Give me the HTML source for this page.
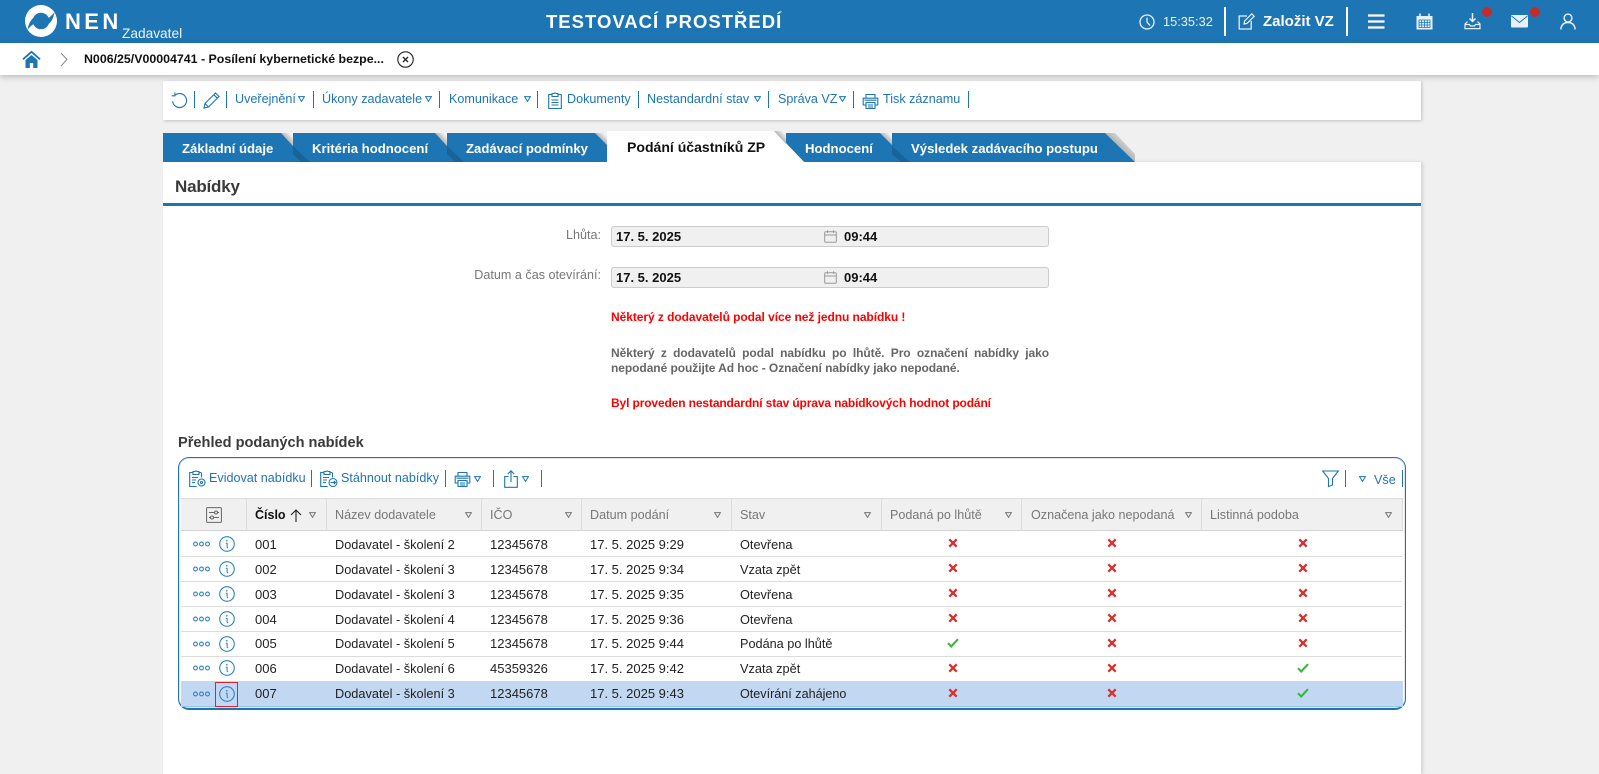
<!DOCTYPE html>
<html lang="cs">
<head>
<meta charset="utf-8">
<title>NEN</title>
<style>
html,body{margin:0;padding:0;width:1599px;height:774px;overflow:hidden;background:#f0f0f0;font-family:"Liberation Sans",Arial,sans-serif}
#p{position:relative;width:1599px;height:774px;overflow:hidden}
.a,.t{position:absolute}
.t{white-space:nowrap;line-height:18px;height:18px;font-size:13px}
.b{color:#1d75b4;font-size:12.6px}
.sep{position:absolute;width:1px;background:#1d75b4}
svg{position:absolute;overflow:visible}
.ic{fill:none;stroke:#1d75b4;stroke-width:1.1}
.hd{color:#777;font-size:12.6px}
.c{color:#222;font-size:13px}
.n{color:#222;font-size:12.75px}
.tb{color:#fff;font-weight:bold;font-size:13.15px}
.line{position:absolute;left:181px;width:1221px;height:1px;background:#dcdcdc}
.hs{position:absolute;top:498px;height:33px;width:1px;background:#dcdcdc}
</style>
</head>
<body>
<div id="p">
<svg width="0" height="0" style="position:absolute">
<defs>
<symbol id="tri" viewBox="0 0 7 6"><path d="M.6.6h5.800L3.500 5.400z" fill="none" stroke="currentColor" stroke-width="1"/></symbol>
<symbol id="x" viewBox="0 0 10 10"><path d="M1.300 1.300l7.400 7.400M8.700 1.300L1.300 8.700" stroke="#d5312f" stroke-width="2.300" fill="none"/></symbol>
<symbol id="ok" viewBox="0 0 12 10"><path d="M1 5.200l3.200 3.300L11 1.200" stroke="#3cb53c" stroke-width="2.100" fill="none"/></symbol>
<symbol id="dots" viewBox="0 0 17 6"><g fill="none" stroke="#2f82bd" stroke-width="1.100"><circle cx="2.500" cy="3" r="1.900"/><circle cx="8.500" cy="3" r="1.900"/><circle cx="14.500" cy="3" r="1.900"/></g></symbol>
<symbol id="inf" viewBox="0 0 16 16"><circle cx="8" cy="8" r="7.300" fill="none" stroke="#2f82bd" stroke-width="1.100"/><circle cx="7.800" cy="4.800" r=".8" fill="#2f82bd"/><path d="M6.800 7.300h1.300v3.600q0 .9 1.100.9" fill="none" stroke="#2f82bd" stroke-width="1"/></symbol>
<symbol id="prn" viewBox="0 0 17 17"><g fill="none" stroke="#1d75b4" stroke-width="1.100"><path d="M4 5V1.500h9V5M4 12H1.200V5.200h14.600V12H13"/><path d="M4 9.500h9v6H4zM6 12h5M6 14h5M2.500 7.200h12"/></g></symbol>
<symbol id="cal" viewBox="0 0 13 13"><g fill="none" stroke="#999" stroke-width="1"><rect x=".7" y="1.800" width="11.600" height="10.500" rx="1"/><path d="M.7 5h11.600M3.500.3v2.600M9.500.3v2.600"/></g></symbol>
</defs>
</svg>

<!-- top bar -->
<div class="a" style="left:0;top:0;width:1599px;height:43px;background:#1d75b4"></div>
<svg style="left:24px;top:4px" width="34" height="34" viewBox="0 0 34 34"><circle cx="17" cy="17" r="16" fill="#fff"/><circle cx="17" cy="17" r="8.300" fill="#1d75b4"/><path d="M10 13.500C6.500 16 4.500 20 3.600 25.500C6.500 22.500 8.300 20.500 10.800 19.500z" fill="#1d75b4"/><path d="M24 20.500C27.500 18 29.500 14 30.400 8.500C27.500 11.500 25.700 13.500 23.200 14.500z" fill="#1d75b4"/></svg>
<div class="t" style="left:65px;top:11px;color:#fff;font-weight:bold;font-size:22px;line-height:22px;height:22px;letter-spacing:3.400px">NEN</div>
<div class="t" style="left:122px;top:25px;color:#eaf3fa;font-size:13.700px">Zadavatel</div>
<div class="t" style="left:546px;top:11px;color:#fff;font-weight:bold;font-size:18.500px;line-height:21px;height:21px;letter-spacing:1px">TESTOVACÍ PROSTŘEDÍ</div>
<svg style="left:1139px;top:14px" width="16" height="16" viewBox="0 0 16 16"><circle cx="8" cy="8" r="7" fill="none" stroke="#e8f1f8" stroke-width="1.300"/><path d="M8 3.600V8l3 3.400" fill="none" stroke="#e8f1f8" stroke-width="1.300"/></svg>
<div class="t" style="left:1163px;top:13px;color:#e8f1f8;font-size:12.800px">15:35:32</div>
<div class="a" style="left:1224px;top:7px;width:2px;height:29px;background:#fff"></div>
<svg style="left:1238px;top:13px" width="18" height="17" viewBox="0 0 18 17"><path d="M9 3H1.200v13h12V8" fill="none" stroke="#e8f1f8" stroke-width="1.300"/><path d="M6 11l.6-3L13.800.8l2.400 2.400L9 10.400z" fill="none" stroke="#e8f1f8" stroke-width="1.200"/></svg>
<div class="t" style="left:1263px;top:13px;color:#fff;font-weight:bold;font-size:15px">Založit VZ</div>
<div class="a" style="left:1346px;top:7px;width:2px;height:29px;background:#fff"></div>
<svg style="left:1368px;top:14px" width="17" height="15" viewBox="0 0 17 15"><path d="M0 1.500h16.500M0 7.500h16.500M0 13.500h16.500" stroke="#fff" stroke-width="2.200" fill="none"/></svg>
<svg style="left:1416px;top:13px" width="17" height="17" viewBox="0 0 17 17"><path d="M.5 3h16v13.500H.5z" fill="#e8f1f8"/><path d="M4 .5v4M13 .5v4" stroke="#e8f1f8" stroke-width="1.600"/><path d="M3 7h11v7.500H3zM5.700 7v7.500M8.500 7v7.500M11.200 7v7.500M3 9.500h11M3 12h11" stroke="#1d75b4" stroke-width=".8" fill="none"/></svg>
<svg style="left:1464px;top:13px" width="17" height="17" viewBox="0 0 17 17"><path d="M8.500 0v8M5.500 5.500l3 3 3-3" stroke="#e8f1f8" stroke-width="1.500" fill="none"/><path d="M3.500 8.500L1 11v4.600h15V11l-2.500-2.500M1 11.500h4.500l1 1.500h4l1-1.500H16" stroke="#e8f1f8" stroke-width="1.200" fill="none"/></svg>
<div class="a" style="left:1482px;top:7px;width:10px;height:10px;border-radius:50%;background:#c62b2b"></div>
<svg style="left:1511px;top:15px" width="17" height="13" viewBox="0 0 17 13"><rect width="17" height="12.500" rx="1" fill="#e8f1f8"/><path d="M.5 1l8 6.500 8-6.500" stroke="#1d75b4" stroke-width="1" fill="none"/></svg>
<div class="a" style="left:1530px;top:7px;width:10px;height:10px;border-radius:50%;background:#c62b2b"></div>
<svg style="left:1560px;top:13px" width="16" height="17" viewBox="0 0 16 17"><circle cx="8" cy="5" r="3.900" fill="none" stroke="#e8f1f8" stroke-width="1.400"/><path d="M.8 16.500c.5-4.500 3-7 7.200-7s6.700 2.500 7.200 7" fill="none" stroke="#e8f1f8" stroke-width="1.400"/></svg>

<!-- breadcrumb -->
<div class="a" style="left:0;top:43px;width:1599px;height:32px;background:#fff;box-shadow:0 2px 6px rgba(0,0,0,.22);z-index:3"></div>
<div class="a" style="left:0;top:43px;width:1599px;height:32px;z-index:4">
<svg style="left:23px;top:8px" width="17" height="17" viewBox="0 0 17 17"><path d="M0 8.300L8.500.8 17 8.300" fill="none" stroke="#1d75b4" stroke-width="1.800"/><path d="M2.500 9L8.500 4l6 5v8h-4.300v-5H6.800v5H2.500z" fill="#1d75b4"/></svg>
<svg style="left:60px;top:9px" width="8" height="15" viewBox="0 0 8 15"><path d="M1 1l6 6.500-6 6.500" fill="none" stroke="#888" stroke-width="1"/></svg>
<div class="t" style="left:84px;top:7px;font-weight:bold;font-size:12.380px;color:#111">N006/25/V00004741 - Posílení kybernetické bezpe...</div>
<svg style="left:397px;top:8px" width="17" height="17" viewBox="0 0 17 17"><circle cx="8.500" cy="8.500" r="7.700" fill="none" stroke="#222" stroke-width="1.100"/><path d="M6 6l5 5M11 6l-5 5" stroke="#222" stroke-width="1.300"/></svg>
</div>

<!-- main panel -->
<div class="a" style="left:163px;top:81px;width:1258px;height:39px;background:#fff;box-shadow:1px 1px 3px rgba(0,0,0,.2)"></div>
<div class="a" style="left:163px;top:162px;width:1258px;height:612px;background:#fff;box-shadow:2px 0 3px rgba(0,0,0,.12)"></div>

<!-- main toolbar -->
<svg style="left:171px;top:92px" width="16" height="16" viewBox="0 0 16 16"><path d="M3.300 3.300A7 7 0 1 1 1.200 9M3.500.3v3.300H.3" class="ic" transform="translate(.4 .2)"/></svg>
<i class="sep" style="left:194px;top:91px;height:17px"></i>
<svg style="left:203px;top:92px" width="17" height="17" viewBox="0 0 17 17"><path d="M1 16l1-4.500L12.500 1l3.500 3.500L5.500 15zM2 11.500L5.500 15M10.800 2.700l3.500 3.500" class="ic"/></svg>
<i class="sep" style="left:226px;top:91px;height:17px"></i>
<div class="t b" style="left:235px;top:90px">Uveřejnění</div>
<svg style="left:298px;top:96px;color:#1d75b4" width="7" height="6"><use href="#tri"/></svg>
<i class="sep" style="left:313px;top:91px;height:17px"></i>
<div class="t b" style="left:322px;top:90px">Úkony zadavatele</div>
<svg style="left:425px;top:96px;color:#1d75b4" width="7" height="6"><use href="#tri"/></svg>
<i class="sep" style="left:439px;top:91px;height:17px"></i>
<div class="t b" style="left:449px;top:90px">Komunikace</div>
<svg style="left:524px;top:96px;color:#1d75b4" width="7" height="6"><use href="#tri"/></svg>
<i class="sep" style="left:537px;top:91px;height:17px"></i>
<svg style="left:548px;top:92px" width="14" height="17" viewBox="0 0 14 17"><path d="M4 2.500H.7v14h12.600v-14H10M4 1.500h1.800a1.500 1.500 0 0 1 2.400 0H10v3H4zM3.500 8h7M3.500 10.500h7M3.500 13h7" class="ic"/></svg>
<div class="t b" style="left:567px;top:90px">Dokumenty</div>
<i class="sep" style="left:638px;top:91px;height:17px"></i>
<div class="t b" style="left:647px;top:90px">Nestandardní stav</div>
<svg style="left:754px;top:96px;color:#1d75b4" width="7" height="6"><use href="#tri"/></svg>
<i class="sep" style="left:768px;top:91px;height:17px"></i>
<div class="t b" style="left:778px;top:90px">Správa VZ</div>
<svg style="left:839px;top:96px;color:#1d75b4" width="7" height="6"><use href="#tri"/></svg>
<i class="sep" style="left:853px;top:91px;height:17px"></i>
<svg style="left:862px;top:93px" width="17" height="17"><use href="#prn"/></svg>
<div class="t b" style="left:883px;top:90px">Tisk záznamu</div>
<i class="sep" style="left:968px;top:91px;height:17px"></i>

<!-- tabs -->
<svg style="left:0;top:0" width="1599" height="170">
<defs><linearGradient id="f" x1="0" y1="1" x2="1" y2="0"><stop offset=".5" stop-color="#b4b4b4"/><stop offset=".85" stop-color="#f2f2f2"/><stop offset="1" stop-color="#f6f6f6"/></linearGradient></defs>
<path d="M281 133h12v13z" fill="url(#f)"/>
<path d="M163 133h118l12 13v16H163z" fill="#1d75b4"/>
<path d="M435 133h12v13z" fill="url(#f)"/>
<path d="M293 133h142l12 13v16H293z" fill="#1d75b4"/>
<path d="M293 146l17 16h-9l-8-8z" fill="#186499"/>
<path d="M595 133h12v12z" fill="url(#f)"/>
<path d="M447 133h148l12 12v17H447z" fill="#1d75b4"/>
<path d="M447 146l17 16h-9l-8-8z" fill="#186499"/>
<path d="M880 133h12v12z" fill="url(#f)"/>
<path d="M786 133h94l12 12v17h-88l-18-19z" fill="#1d75b4"/>
<path d="M1105 133h10l20 21v8z" fill="url(#f)"/>
<path d="M892 133h213l30 29H892z" fill="#1d75b4"/>
<path d="M892 146l18 16h-9l-9-8z" fill="#186499"/>
<path d="M607 131h167l30 31H607z" fill="#fff"/>
<path d="M774 131h12v13z" fill="url(#f)"/>
</svg>
<div class="t tb" style="left:182px;top:140px">Základní údaje</div>
<div class="t tb" style="left:312px;top:140px">Kritéria hodnocení</div>
<div class="t tb" style="left:466px;top:140px">Zadávací podmínky</div>
<div class="t" style="left:627px;top:138px;color:#111;font-weight:bold;font-size:14.050px">Podání účastníků ZP</div>
<div class="t tb" style="left:805px;top:140px">Hodnocení</div>
<div class="t tb" style="left:911px;top:140px">Výsledek zadávacího postupu</div>

<!-- section heading -->
<div class="t" style="left:175px;top:177px;height:20px;line-height:20px;font-weight:bold;font-size:17px;letter-spacing:-.2px;color:#3a3a3a">Nabídky</div>
<div class="a" style="left:163px;top:203px;width:1258px;height:3px;background:#1d75b4"></div>

<!-- form -->
<div class="t" style="right:998px;top:226px;color:#777;font-size:12.600px">Lhůta:</div>
<div class="t" style="right:998px;top:266px;color:#777;font-size:12.600px">Datum a čas otevírání:</div>
<div class="a" style="left:611px;top:226px;width:436px;height:19px;background:#f0f0f0;border:1px solid #ccc;border-radius:3px"></div>
<div class="a" style="left:611px;top:267px;width:436px;height:19px;background:#f0f0f0;border:1px solid #ccc;border-radius:3px"></div>
<div class="t" style="left:616px;top:228px;font-weight:bold;font-size:13px;color:#111">17. 5. 2025</div>
<div class="t" style="left:616px;top:269px;font-weight:bold;font-size:13px;color:#111">17. 5. 2025</div>
<svg style="left:824px;top:230px" width="13" height="13"><use href="#cal"/></svg>
<svg style="left:824px;top:271px" width="13" height="13"><use href="#cal"/></svg>
<div class="t" style="left:844px;top:228px;font-weight:bold;font-size:13px;color:#111">09:44</div>
<div class="t" style="left:844px;top:269px;font-weight:bold;font-size:13px;color:#111">09:44</div>

<div class="t" style="left:611px;top:308px;font-weight:bold;font-size:12px;letter-spacing:-.06px;color:#f00">Některý z dodavatelů podal více než jednu nabídku !</div>
<div class="a" style="left:611px;top:346px;width:438px;font-weight:bold;font-size:12px;line-height:15px;letter-spacing:-.06px;color:#666;text-align:justify">Některý z dodavatelů podal nabídku po lhůtě. Pro označení nabídky jako nepodané použijte Ad hoc - Označení nabídky jako nepodané.</div>
<div class="t" style="left:611px;top:394px;font-weight:bold;font-size:12px;letter-spacing:-.13px;color:#f00">Byl proveden nestandardní stav úprava nabídkových hodnot podání</div>

<div class="t" style="left:178px;top:434px;font-weight:bold;font-size:14.600px;color:#3a3a3a">Přehled podaných nabídek</div>

<!-- grid -->
<div class="a" style="left:178px;top:457px;width:1226px;height:250px;border:1.500px solid #1d75b4;border-top-width:1px;border-bottom-width:2px;border-radius:11px;box-shadow:inset 0 0 0 1px #e6e6e6;background:#fff"></div>

<svg style="left:189px;top:470px" width="17" height="17" viewBox="0 0 17 17"><path d="M4 2.500H.7v14h7M12 2.500h-2M12.500 2.500v5M4 1.500h1.800a1.500 1.500 0 0 1 2.400 0H10v3H4zM3 7.500h6M3 10h4M3 12.500h3" class="ic"/><circle cx="12.500" cy="12.500" r="3.500" class="ic"/><circle cx="12.500" cy="12.500" r="1" class="ic"/></svg>
<div class="t b" style="left:209px;top:469px">Evidovat nabídku</div>
<i class="sep" style="left:311px;top:470px;height:17px"></i>
<svg style="left:320px;top:470px" width="18" height="17" viewBox="0 0 18 17"><path d="M4 2.500H.7v14h7M12 2.500h-2M12.500 2.500v5M4 1.500h1.800a1.500 1.500 0 0 1 2.400 0H10v3H4zM3 7.500h6M3 10h4M3 12.500h3" class="ic"/><circle cx="13" cy="12.500" r="4" class="ic"/><path d="M10.500 12.500h5M13.800 10.800l1.700 1.700-1.700 1.700" class="ic"/></svg>
<div class="t b" style="left:341px;top:469px">Stáhnout nabídky</div>
<i class="sep" style="left:445px;top:470px;height:17px"></i>
<svg style="left:454px;top:471px" width="17" height="17"><use href="#prn"/></svg>
<svg style="left:474px;top:476px;color:#1d75b4" width="7" height="6"><use href="#tri"/></svg>
<i class="sep" style="left:493px;top:470px;height:17px"></i>
<svg style="left:504px;top:470px" width="14" height="18" viewBox="0 0 14 18"><path d="M4.500 6.500H.7v10.800h12.600V6.500H9.500M7 12V1M3.800 4L7 .8 10.200 4" class="ic"/></svg>
<svg style="left:522px;top:476px;color:#1d75b4" width="7" height="6"><use href="#tri"/></svg>
<i class="sep" style="left:541px;top:470px;height:17px"></i>
<svg style="left:1322px;top:470px" width="17" height="17" viewBox="0 0 17 17"><path d="M.7 1h15.600L10.500 8.500V15l-4 1.500V8.500z" class="ic" stroke-width="1.200"/></svg>
<i class="sep" style="left:1345px;top:470px;height:17px"></i>
<svg style="left:1359px;top:476px;color:#1d75b4" width="7" height="6"><use href="#tri"/></svg>
<div class="t b" style="left:1374px;top:471px">Vše</div>
<i class="sep" style="left:1402px;top:470px;height:17px"></i>

<!-- header row -->
<div class="a" style="left:181px;top:498px;width:1221px;height:33px;background:#f0f0f0;border-top:1px solid #dcdcdc;border-bottom:1px solid #d4d4d4;box-sizing:border-box"></div>
<i class="hs" style="left:246px"></i><i class="hs" style="left:326px"></i><i class="hs" style="left:481px"></i><i class="hs" style="left:581px"></i><i class="hs" style="left:731px"></i><i class="hs" style="left:881px"></i><i class="hs" style="left:1021px"></i><i class="hs" style="left:1201px"></i><i class="hs" style="left:1402px"></i>
<svg style="left:206px;top:507px" width="16" height="16" viewBox="0 0 16 16"><rect x=".6" y=".6" width="14.800" height="14.800" rx="1" fill="none" stroke="#666" stroke-width="1"/><path d="M3 5.500h10M3 10.500h10" stroke="#666" stroke-width=".9"/><circle cx="10" cy="5.500" r="1.500" fill="#f0f0f0" stroke="#666"/><circle cx="6" cy="10.500" r="1.500" fill="#f0f0f0" stroke="#666"/></svg>
<div class="t" style="left:255px;top:506px;font-weight:bold;color:#111;font-size:12.500px">Číslo</div>
<svg style="left:290px;top:509px" width="12" height="13" viewBox="0 0 12 13"><path d="M6 13V1M1 6l5-5 5 5" fill="none" stroke="#222" stroke-width="1.100"/></svg>
<div class="t hd" style="left:335px;top:506px">Název dodavatele</div>
<div class="t hd" style="left:490px;top:506px">IČO</div>
<div class="t hd" style="left:590px;top:506px">Datum podání</div>
<div class="t hd" style="left:740px;top:506px">Stav</div>
<div class="t hd" style="left:890px;top:506px">Podaná po lhůtě</div>
<div class="t hd" style="left:1031px;top:506px">Označena jako nepodaná</div>
<div class="t hd" style="left:1210px;top:506px">Listinná podoba</div>
<svg style="left:309px;top:512px;color:#777" width="7" height="6"><use href="#tri"/></svg>
<svg style="left:465px;top:512px;color:#777" width="7" height="6"><use href="#tri"/></svg>
<svg style="left:565px;top:512px;color:#777" width="7" height="6"><use href="#tri"/></svg>
<svg style="left:714px;top:512px;color:#777" width="7" height="6"><use href="#tri"/></svg>
<svg style="left:864px;top:512px;color:#777" width="7" height="6"><use href="#tri"/></svg>
<svg style="left:1005px;top:512px;color:#777" width="7" height="6"><use href="#tri"/></svg>
<svg style="left:1185px;top:512px;color:#777" width="7" height="6"><use href="#tri"/></svg>
<svg style="left:1385px;top:512px;color:#777" width="7" height="6"><use href="#tri"/></svg>

<!-- rows -->
<div class="a" style="left:181px;top:681px;width:1222px;height:25px;background:#c2d7f2;border-bottom:1px solid #9ec3ea;box-sizing:content-box"></div>
<i class="line" style="top:556px"></i><i class="line" style="top:581px"></i><i class="line" style="top:606px"></i><i class="line" style="top:631px"></i><i class="line" style="top:656px"></i>

<svg style="left:193px;top:541px" width="17" height="6"><use href="#dots"/></svg><svg style="left:219px;top:536px" width="16" height="16"><use href="#inf"/></svg>
<svg style="left:193px;top:566px" width="17" height="6"><use href="#dots"/></svg><svg style="left:219px;top:561px" width="16" height="16"><use href="#inf"/></svg>
<svg style="left:193px;top:591px" width="17" height="6"><use href="#dots"/></svg><svg style="left:219px;top:586px" width="16" height="16"><use href="#inf"/></svg>
<svg style="left:193px;top:616px" width="17" height="6"><use href="#dots"/></svg><svg style="left:219px;top:611px" width="16" height="16"><use href="#inf"/></svg>
<svg style="left:193px;top:641px" width="17" height="6"><use href="#dots"/></svg><svg style="left:219px;top:636px" width="16" height="16"><use href="#inf"/></svg>
<svg style="left:193px;top:665px" width="17" height="6"><use href="#dots"/></svg><svg style="left:219px;top:660px" width="16" height="16"><use href="#inf"/></svg>
<svg style="left:193px;top:691px" width="17" height="6"><use href="#dots"/></svg><svg style="left:219px;top:686px" width="16" height="16"><use href="#inf"/></svg>
<div class="a" style="left:215px;top:682px;width:21px;height:23px;border:1px solid #d62430"></div>

<div class="t c" style="left:255px;top:536px">001</div><div class="t n" style="left:335px;top:536px">Dodavatel - školení 2</div><div class="t c" style="left:490px;top:536px">12345678</div><div class="t c" style="left:590px;top:536px">17. 5. 2025 9:29</div><div class="t n" style="left:740px;top:536px">Otevřena</div>
<div class="t c" style="left:255px;top:561px">002</div><div class="t n" style="left:335px;top:561px">Dodavatel - školení 3</div><div class="t c" style="left:490px;top:561px">12345678</div><div class="t c" style="left:590px;top:561px">17. 5. 2025 9:34</div><div class="t n" style="left:740px;top:561px">Vzata zpět</div>
<div class="t c" style="left:255px;top:586px">003</div><div class="t n" style="left:335px;top:586px">Dodavatel - školení 3</div><div class="t c" style="left:490px;top:586px">12345678</div><div class="t c" style="left:590px;top:586px">17. 5. 2025 9:35</div><div class="t n" style="left:740px;top:586px">Otevřena</div>
<div class="t c" style="left:255px;top:611px">004</div><div class="t n" style="left:335px;top:611px">Dodavatel - školení 4</div><div class="t c" style="left:490px;top:611px">12345678</div><div class="t c" style="left:590px;top:611px">17. 5. 2025 9:36</div><div class="t n" style="left:740px;top:611px">Otevřena</div>
<div class="t c" style="left:255px;top:635px">005</div><div class="t n" style="left:335px;top:635px">Dodavatel - školení 5</div><div class="t c" style="left:490px;top:635px">12345678</div><div class="t c" style="left:590px;top:635px">17. 5. 2025 9:44</div><div class="t n" style="left:740px;top:635px;font-size:12.700px">Podána po lhůtě</div>
<div class="t c" style="left:255px;top:660px">006</div><div class="t n" style="left:335px;top:660px">Dodavatel - školení 6</div><div class="t c" style="left:490px;top:660px">45359326</div><div class="t c" style="left:590px;top:660px">17. 5. 2025 9:42</div><div class="t n" style="left:740px;top:660px">Vzata zpět</div>
<div class="t c" style="left:255px;top:685px">007</div><div class="t n" style="left:335px;top:685px">Dodavatel - školení 3</div><div class="t c" style="left:490px;top:685px">12345678</div><div class="t c" style="left:590px;top:685px">17. 5. 2025 9:43</div><div class="t n" style="left:740px;top:685px;font-size:12.600px">Otevírání zahájeno</div>

<svg style="left:948px;top:538px" width="10" height="10"><use href="#x"/></svg><svg style="left:1107px;top:538px" width="10" height="10"><use href="#x"/></svg><svg style="left:1298px;top:538px" width="10" height="10"><use href="#x"/></svg>
<svg style="left:948px;top:563px" width="10" height="10"><use href="#x"/></svg><svg style="left:1107px;top:563px" width="10" height="10"><use href="#x"/></svg><svg style="left:1298px;top:563px" width="10" height="10"><use href="#x"/></svg>
<svg style="left:948px;top:588px" width="10" height="10"><use href="#x"/></svg><svg style="left:1107px;top:588px" width="10" height="10"><use href="#x"/></svg><svg style="left:1298px;top:588px" width="10" height="10"><use href="#x"/></svg>
<svg style="left:948px;top:613px" width="10" height="10"><use href="#x"/></svg><svg style="left:1107px;top:613px" width="10" height="10"><use href="#x"/></svg><svg style="left:1298px;top:613px" width="10" height="10"><use href="#x"/></svg>
<svg style="left:947px;top:638px" width="12" height="10"><use href="#ok"/></svg><svg style="left:1107px;top:638px" width="10" height="10"><use href="#x"/></svg><svg style="left:1298px;top:638px" width="10" height="10"><use href="#x"/></svg>
<svg style="left:948px;top:663px" width="10" height="10"><use href="#x"/></svg><svg style="left:1107px;top:663px" width="10" height="10"><use href="#x"/></svg><svg style="left:1297px;top:663px" width="12" height="10"><use href="#ok"/></svg>
<svg style="left:948px;top:688px" width="10" height="10"><use href="#x"/></svg><svg style="left:1107px;top:688px" width="10" height="10"><use href="#x"/></svg><svg style="left:1297px;top:688px" width="12" height="10"><use href="#ok"/></svg>
</div>
</body>
</html>
